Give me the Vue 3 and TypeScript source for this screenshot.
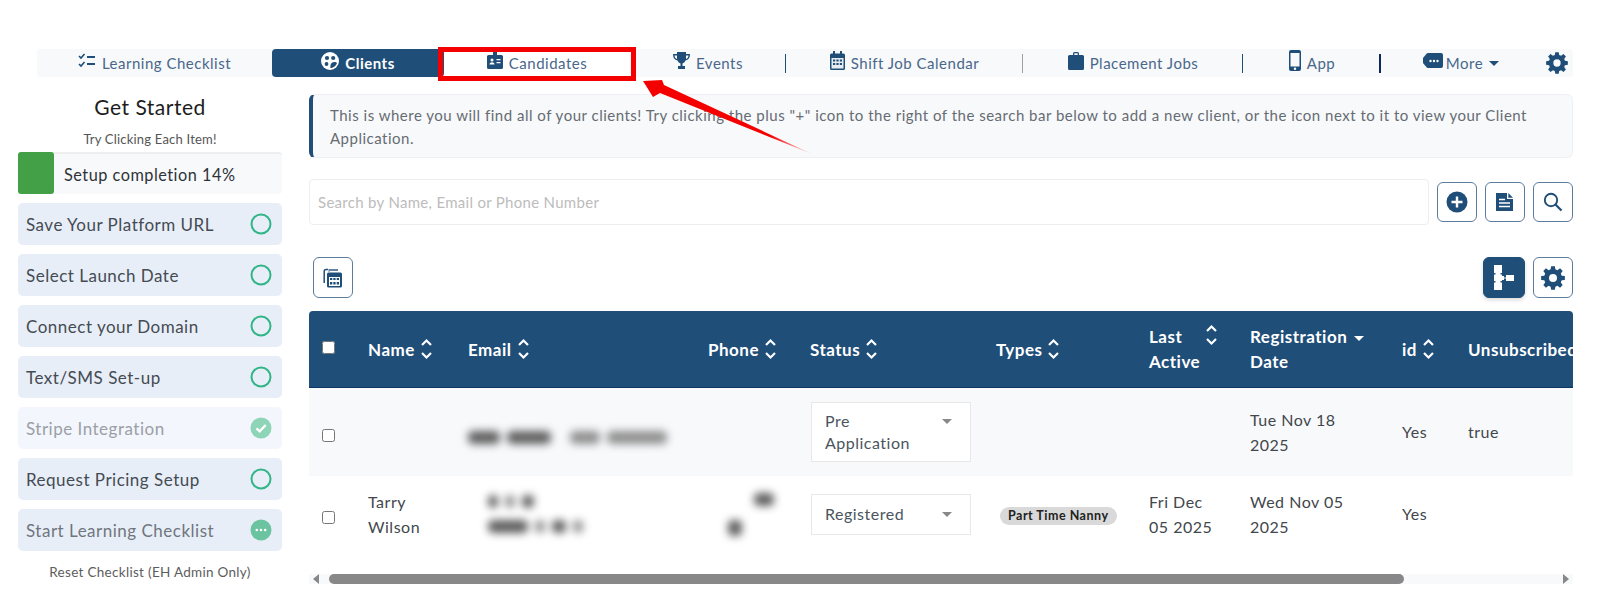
<template>
  <div class="page">
    <nav class="nav">
      <a class="nav-item">
        <svg class="ic" width="18" height="16" viewBox="0 0 18 16"><path d="M1 3l2 2 3.500-4M1 11l2 2 3.500-4" fill="none" stroke="#1f4e79" stroke-width="1.600"/><path d="M9 3h8v2H9zM9 10h8v2H9z" fill="#1f4e79"/></svg>
        Learning Checklist
      </a>
      <a class="nav-item active">
        <svg class="ic" width="18" height="18" viewBox="0 0 18 18"><circle cx="9" cy="9" r="9" fill="#fff"/><circle cx="6" cy="6" r="2.100" fill="#1f4e79"/><circle cx="12.200" cy="6" r="2.100" fill="#1f4e79"/><circle cx="5.500" cy="12" r="1.900" fill="#1f4e79"/><path d="M9.500 16c-.5-3 .5-6 4-6 1 0 2 .5 2.500 1-.8 2.500-3.500 5-6.500 5z" fill="#1f4e79"/></svg>
        Clients
      </a>
      <a class="nav-item boxed">
        <svg class="ic" width="16" height="19" viewBox="0 0 16 19"><path d="M1.500 5H6V1h4v4h4.500A1.500 1.500 0 0 1 16 6.500v11a1.500 1.500 0 0 1-1.500 1.500h-13A1.500 1.500 0 0 1 0 17.500v-11A1.500 1.500 0 0 1 1.500 5z" transform="translate(0 -1)" fill="#1f4e79"/><circle cx="5" cy="9" r="1.500" fill="#fff"/><path d="M2.500 13.500c0-3 5-3 5 0zM9.500 8h4v1.300h-4zM9.500 11h4v1.300h-4z" fill="#fff"/></svg>
        Candidates
      </a>
      <a class="nav-item sep">
        <svg class="ic" width="17" height="17" viewBox="0 0 17 17"><path d="M4 0h9v2h4c0 4-1.500 6-4.500 6.500C12 10 10.500 11 9.500 11.500V14H12v3H5v-3h2.500v-2.500C6.500 11 5 10 4.500 8.500 1.500 8 0 6 0 2h4zM1.500 3.500C1.700 5.500 2.500 6.500 4 7V3.500zM13 3.500V7c1.500-.5 2.300-1.500 2.500-3.500z" fill="#1f4e79"/></svg>
        Events
      </a>
      <a class="nav-item sep sep-gray">
        <svg class="ic" width="15" height="19" viewBox="0 0 15 19"><path d="M3 0h2v2.500h5V0h2v2.500h1.500A1.500 1.500 0 0 1 15 4v13.500a1.500 1.500 0 0 1-1.500 1.500h-12A1.500 1.500 0 0 1 0 17.500V4a1.500 1.500 0 0 1 1.500-1.500H3z" fill="#1f4e79"/><rect x="1.500" y="7" width="12" height="10.500" fill="#e9edf2"/><path d="M3 8.500h2.200v2H3zM6.400 8.500h2.200v2H6.400zM9.800 8.500H12v2H9.800zM3 12h2.200v2H3zM6.400 12h2.200v2H6.400zM9.800 12H12v2H9.800z" fill="#1f4e79"/></svg>
        Shift Job Calendar
      </a>
      <a class="nav-item sep">
        <svg class="ic" width="16" height="18" viewBox="0 0 16 18"><path d="M5 3V1.500A1.500 1.500 0 0 1 6.500 0h3A1.500 1.500 0 0 1 11 1.500V3h3.500A1.500 1.500 0 0 1 16 4.500v12a1.500 1.500 0 0 1-1.500 1.500h-13A1.500 1.500 0 0 1 0 16.500v-12A1.500 1.500 0 0 1 1.500 3zm1.300 0h3.400V1.300H6.300z" fill="#1f4e79" fill-rule="evenodd"/></svg>
        Placement Jobs
      </a>
      <a class="nav-item sep sep-dark">
        <svg class="ic" width="12" height="21" viewBox="0 0 12 21"><path d="M2 0h8a2 2 0 0 1 2 2v17a2 2 0 0 1-2 2H2a2 2 0 0 1-2-2V2a2 2 0 0 1 2-2zm-.5 3v13.500h9V3z" fill="#1f4e79" fill-rule="evenodd"/><circle cx="6" cy="18.700" r="1.200" fill="#fff"/></svg>
        App
      </a>
      <a class="nav-item more">
        <svg class="ic" width="20" height="15" viewBox="0 0 20 15"><path d="M5 0h13a2 2 0 0 1 2 2v11a2 2 0 0 1-2 2H5a2 2 0 0 1-1.500-.7L0 10V5l3.500-4.300A2 2 0 0 1 5 0z" fill="#1f4e79"/><circle cx="7.500" cy="8" r="1.200" fill="#fff"/><circle cx="11" cy="8" r="1.200" fill="#fff"/><circle cx="14.500" cy="8" r="1.200" fill="#fff"/></svg>
        More <i class="caret"></i>
      </a>
      <a class="nav-item gear-cell">
        <svg width="22" height="22" viewBox="0 0 24 24"><path :d="gearPath" fill="#1f4e79" fill-rule="evenodd"/></svg>
      </a>
    </nav>

    <div class="body">
      <aside class="side">
        <h2 class="side-title">Get Started</h2>
        <p class="side-sub">Try Clicking Each Item!</p>
        <div class="progress">
          <div class="progress-fill" :style="{ width: '36px' }"></div>
          <span>Setup completion 14%</span>
        </div>
        <div v-for="item in checklist" :key="item.label" class="check-row" :class="item.cls">
          <span>{{ item.label }}</span>
          <svg width="22" height="22" viewBox="0 0 22 22">
            <circle v-if="item.state === 'open'" cx="11" cy="11" r="9.500" fill="none" stroke="#2fb586" stroke-width="2"/>
            <template v-else-if="item.state === 'done'">
              <circle cx="11" cy="11" r="10.500" fill="#8ed5b8"/>
              <path d="M6.500 11.300l3.200 3 6-6.300" fill="none" stroke="#fff" stroke-width="2.400"/>
            </template>
            <template v-else>
              <circle cx="11" cy="11" r="10.500" fill="#6cc3a0"/>
              <circle cx="6.800" cy="11" r="1.300" fill="#fff"/>
              <circle cx="11" cy="11" r="1.300" fill="#fff"/>
              <circle cx="15.200" cy="11" r="1.300" fill="#fff"/>
            </template>
          </svg>
        </div>
        <p class="reset">Reset Checklist (EH Admin Only)</p>
      </aside>

      <main class="main">
        <div class="alert">This is where you will find all of your clients! Try clicking the plus "+" icon to the right of the search bar below to add a new client, or the icon next to it to view your Client Application.</div>

        <div class="search-row">
          <input class="search" type="text" placeholder="Search by Name, Email or Phone Number" />
          <button type="button" class="btn">
            <svg width="22" height="22" viewBox="0 0 22 22"><circle cx="11" cy="11" r="10.500" fill="#1f4e79"/><path d="M11 5.500v11M5.500 11h11" stroke="#fff" stroke-width="2.400"/></svg>
          </button>
          <button type="button" class="btn">
            <svg width="20" height="20" viewBox="0 0 20 20"><path d="M1 1h11v6h6v12H1z" fill="#1f4e79"/><path d="M13.300 1L18 5.700h-4.700z" fill="#1f4e79"/><path d="M4 7.500h6M4 11h11M4 14.500h11" stroke="#fff" stroke-width="1.500"/></svg>
          </button>
          <button type="button" class="btn">
            <svg width="20" height="20" viewBox="0 0 20 20"><circle cx="8" cy="8" r="6.200" fill="none" stroke="#1f4e79" stroke-width="1.900"/><path d="M12.500 12.500l6 6" stroke="#1f4e79" stroke-width="2.200"/></svg>
          </button>
        </div>

        <div class="tool-row">
          <button type="button" class="btn calc">
            <svg width="20" height="20" viewBox="0 0 20 20"><path d="M5 1.500H3A1.800 1.800 0 0 0 1.200 3.300V15" fill="none" stroke="#1f4e79" stroke-width="1.500"/><path d="M5.500 1H15v2H6.500v1H5.500z" fill="#1f4e79" opacity=".7"/><rect x="4" y="4.500" width="15" height="15" rx="1.500" fill="#1f4e79"/><rect x="6" y="9" width="11" height="9" fill="#fff"/><path d="M7 10h2.300v2H7zM10.300 10h2.300v2h-2.300zM13.700 10H16v2h-2.300zM7 14h2.300v2.500H7zM10.300 14h2.300v2.500h-2.300zM13.700 14H16v2.500h-2.300z" fill="#1f4e79"/></svg>
          </button>
          <div class="tool-right">
            <button type="button" class="btn solid">
              <svg width="20" height="25" viewBox="0 0 20 25"><path d="M0 0h8v8H6.500v1.500H8V16H6.500v1.500H8V25H0v-7.500h1.500V16H0V9.500h1.500V8H0z" fill="#fff"/><path d="M8 11h2v1.500h2V10h8v6h-8v-2.500h-2V15H8z" fill="#fff"/></svg>
            </button>
            <button type="button" class="btn">
              <svg width="24" height="24" viewBox="0 0 24 24"><path :d="gearPath" fill="#1f4e79" fill-rule="evenodd"/></svg>
            </button>
          </div>
        </div>

        <div class="table-wrap">
          <table class="table">
            <colgroup>
              <col v-for="(w, i) in colWidths" :key="i" :style="{ width: w + 'px' }" />
            </colgroup>
            <thead>
              <tr>
                <th><input type="checkbox" class="cb head-cb" /></th>
                <th v-for="h in sortableHead" :key="h">
                  <span class="th-in">{{ h }}
                    <svg class="sort" width="13" height="22" viewBox="0 0 13 22"><path d="M2 7l4.500-4.500L11 7M2 15l4.500 4.500L11 15" fill="none" stroke="#fff" stroke-width="2.200"/></svg>
                  </span>
                </th>
                <th>
                  <div class="th-split"><span>Last<br />Active</span>
                    <svg class="sort" width="13" height="22" viewBox="0 0 13 22"><path d="M2 7l4.500-4.500L11 7M2 15l4.500 4.500L11 15" fill="none" stroke="#fff" stroke-width="2.200"/></svg>
                  </div>
                </th>
                <th>Registration <i class="caret white"></i><br />Date</th>
                <th>
                  <span class="th-in">id
                    <svg class="sort" width="13" height="22" viewBox="0 0 13 22"><path d="M2 7l4.500-4.500L11 7M2 15l4.500 4.500L11 15" fill="none" stroke="#fff" stroke-width="2.200"/></svg>
                  </span>
                </th>
                <th>Unsubscribed</th>
              </tr>
            </thead>
            <tbody>
              <tr class="row-a">
                <td><input type="checkbox" class="cb" /></td>
                <td></td>
                <td colspan="2">
                  <div class="blur-line first">
                    <i class="blob w32 dark"></i><i class="blob w44 dark"></i><i class="blob w30 gap"></i><i class="blob w60"></i>
                  </div>
                </td>
                <td>
                  <div class="select tall"><span>Pre<br />Application</span><i class="caret gray"></i></div>
                </td>
                <td></td>
                <td></td>
                <td>Tue Nov 18<br />2025</td>
                <td>Yes</td>
                <td>true</td>
              </tr>
              <tr>
                <td><input type="checkbox" class="cb" /></td>
                <td>Tarry<br />Wilson</td>
                <td>
                  <div class="blur-block">
                    <div class="blur-line top"><i class="blob w10 dark"></i><i class="blob w10"></i><i class="blob w12 dark"></i></div>
                    <div class="blur-line"><i class="blob w40 dark"></i><i class="blob w10"></i><i class="blob w14 dark"></i><i class="blob w10"></i></div>
                  </div>
                </td>
                <td>
                  <div class="blur-block phone">
                    <i class="blob w20 dark"></i>
                    <i class="blob w14 dark low"></i>
                  </div>
                </td>
                <td>
                  <div class="select"><span>Registered</span><i class="caret gray"></i></div>
                </td>
                <td><span class="chip">Part Time Nanny</span></td>
                <td>Fri Dec<br />05 2025</td>
                <td>Wed Nov 05<br />2025</td>
                <td>Yes</td>
                <td></td>
              </tr>
            </tbody>
          </table>
        </div>

        <div class="scrollbar">
          <i class="arrow left"></i>
          <div class="thumb"></div>
          <i class="arrow right"></i>
        </div>
      </main>
    </div>

    <!-- annotations on top of the screenshot -->
    <div class="mark-box"></div>
    <svg class="mark-arrow" width="180" height="85" viewBox="0 0 180 85">
      <defs>
        <linearGradient id="tail" x1="0" y1="0" x2="1" y2="0">
          <stop offset="0.75" stop-color="#f40000" />
          <stop offset="1" stop-color="#f40000" stop-opacity="0.1" />
        </linearGradient>
      </defs>
      <polygon points="3,4 22,3 24,8 172,77 20,16 13,20" fill="url(#tail)" />
    </svg>
  </div>
</template>

<script setup lang="ts">
type CheckState = 'open' | 'done' | 'more'
interface CheckItem { label: string; state: CheckState; cls?: string }

const checklist: CheckItem[] = [
  { label: 'Save Your Platform URL', state: 'open' },
  { label: 'Select Launch Date', state: 'open' },
  { label: 'Connect your Domain', state: 'open' },
  { label: 'Text/SMS Set-up', state: 'open' },
  { label: 'Stripe Integration', state: 'done', cls: 'faded' },
  { label: 'Request Pricing Setup', state: 'open' },
  { label: 'Start Learning Checklist', state: 'more', cls: 'muted' },
]

const colWidths = [47, 100, 240, 102, 186, 153, 101, 152, 66, 140]
const sortableHead = ['Name', 'Email', 'Phone', 'Status', 'Types']

// cog outline with a round hole, shared by the settings buttons
function buildGear(teeth: number, outer: number, inner: number, hole: number): string {
  const pts: string[] = []
  const step = (Math.PI * 2) / teeth
  for (let i = 0; i < teeth; i++) {
    const a = i * step - Math.PI / 2
    const at = (r: number, d: number) =>
      `${(12 + r * Math.cos(a + d)).toFixed(2)} ${(12 + r * Math.sin(a + d)).toFixed(2)}`
    pts.push(at(inner, -step * 0.34), at(outer, -step * 0.2), at(outer, step * 0.2), at(inner, step * 0.34))
  }
  return `M${pts.join('L')}Z M${12 - hole} 12a${hole} ${hole} 0 1 0 ${hole * 2} 0a${hole} ${hole} 0 1 0 ${-hole * 2} 0Z`
}
const gearPath = buildGear(8, 12, 9, 4)
</script>

<style scoped>
.page {
  position: relative;
  width: 1600px;
  height: 595px;
  overflow: hidden;
  background: #fff;
  font-family: "Lato", "Open Sans", sans-serif;
  font-size: 16px;
  letter-spacing: 0.5px;
  color: #3a3f44;
}
.nav {
  display: grid;
  grid-template-columns: 235px 172px 186px 156px 237px 220px 138px 149px 43px;
  height: 28px;
  margin: 49px 27px 17px 37px;
  background: #f8f9fb;
  border-radius: 4px;
}
.nav-item {
  position: relative;
  display: flex;
  align-items: center;
  justify-content: center;
  gap: 6px;
  color: #49678a;
  font-size: 15px;
  white-space: nowrap;
}
.ic { margin-top: -5px; flex: none; }
.nav-item.active {
  background: #1f4e79;
  color: #fff;
  font-weight: 700;
  border-radius: 4px;
}
.nav-item.boxed { background: #fff; }
.nav-item.sep::after {
  content: "";
  position: absolute;
  right: 0;
  top: 5px;
  height: 19px;
  width: 1px;
  background: #1f4e79;
}
.nav-item.sep-gray::after { background: #9aa0a6; }
.nav-item.sep-dark::after { width: 2px; background: #0b2a5b; }
.nav-item.more { gap: 3px; padding-left: 11px; }
.gear-cell { padding-left: 10px; }
.caret {
  display: inline-block;
  width: 0;
  height: 0;
  margin-left: 3px;
  border-left: 5px solid transparent;
  border-right: 5px solid transparent;
  border-top: 5px solid #1f4e79;
  vertical-align: middle;
}
.caret.white { border-top-color: #fff; margin-left: 2px; }
.caret.gray { border-top-color: #888; margin: 0; }

.body { display: flex; }
.side { flex: none; width: 264px; margin: 0 27px 0 18px; }
.side-title {
  margin: 0;
  font-size: 21px;
  font-weight: 400;
  line-height: 26px;
  text-align: center;
  color: #1d1d1d;
}
.side-sub {
  margin: 10px 0 0;
  font-size: 13px;
  line-height: 18px;
  letter-spacing: 0.2px;
  text-align: center;
  color: #555;
}
.progress {
  display: flex;
  align-items: center;
  box-sizing: border-box;
  height: 42px;
  margin-top: 4px;
  background: #f8f9fb;
  border-top: 2px solid #eee;
  border-radius: 4px;
  font-size: 16.300px;
  color: #2e3338;
}
.progress-fill { height: 42px; margin: -2px 10px 0 0; background: #43a047; border-radius: 3px; }
.check-row {
  display: flex;
  align-items: center;
  justify-content: space-between;
  height: 42px;
  margin-top: 9px;
  padding: 0 10px 0 8px;
  background: #e8eef8;
  border-radius: 5px;
  font-size: 17px;
  color: #444b52;
}
.check-row.faded { background: #f3f6fc; color: #9aa0a6; }
.check-row.muted { color: #6f767d; }
.reset {
  margin: 11px 0 0;
  font-size: 13.500px;
  line-height: 20px;
  letter-spacing: 0.3px;
  text-align: center;
  color: #5c5c5c;
}

.main { flex: none; width: 1264px; }
.alert {
  box-sizing: border-box;
  height: 64px;
  padding: 9px 17px;
  background: #f8f9fb;
  border: 1px solid #eef0f3;
  border-left: 4px solid #1f4e79;
  border-radius: 6px;
  font-size: 15px;
  line-height: 23px;
  color: #666c73;
}
.search-row { display: flex; align-items: center; gap: 8px; margin-top: 21px; }
.search {
  flex: 1;
  box-sizing: border-box;
  height: 46px;
  padding: 0 8px;
  border: 1px solid #eee;
  border-radius: 4px;
  outline: none;
  font: inherit;
  font-size: 15px;
  letter-spacing: 0.3px;
}
.search::placeholder { color: #bcbcbc; }
.btn {
  flex: none;
  display: flex;
  align-items: center;
  justify-content: center;
  box-sizing: border-box;
  width: 40px;
  height: 40px;
  padding: 0;
  background: #fff;
  border: 1px solid #5d7b9b;
  border-radius: 6px;
}
.tool-row { display: flex; justify-content: space-between; align-items: center; margin: 32px 0 13px 4px; }
.tool-row .btn { height: 41px; }
.tool-right { display: flex; gap: 8px; }
.btn.solid { width: 42px; background: #1f4e79; border-color: #1f4e79; box-shadow: 0 2px 4px rgba(0,0,0,.15); }

.table-wrap { overflow: hidden; border-radius: 4px 4px 0 0; }
.table { width: 1287px; table-layout: fixed; border-collapse: collapse; }
th {
  height: 76px;
  padding: 0 12px;
  background: #1f4e79;
  border-bottom: 1px solid #0f3566;
  color: #fff;
  font-size: 17px;
  font-weight: 700;
  line-height: 25px;
  text-align: left;
  white-space: nowrap;
}
.th-in { display: inline-flex; align-items: center; gap: 5px; }
.th-split { display: flex; justify-content: space-between; align-items: flex-start; padding-right: 8px; }
td {
  padding: 0 12px;
  height: 88px;
  font-size: 16px;
  line-height: 25.500px;
  color: #42474c;
  overflow: hidden;
}
tbody tr + tr td { height: 76px; }
.row-a td { background: #f8f9fb; }
.cb { display: block; width: 13px; height: 13px; margin: 6px 0 0 1px; }
.cb.head-cb { margin: -4px 0 0 1px; }
.select {
  display: flex;
  align-items: center;
  justify-content: space-between;
  padding: 7px 18px 7px 13px;
  height: 41px;
  box-sizing: border-box;
  background: #fff;
  border: 1px solid #e8e8e8;
  color: #4a5560;
  margin: 0 1px;
}
.select.tall { height: 60px; line-height: 22px; }
.select.tall .caret { margin-top: -22px; }
.chip {
  display: inline-block;
  margin-left: 4px;
  padding: 0 8px;
  background: #d9d9d9;
  border-radius: 10px;
  font-size: 12.500px;
  font-weight: 700;
  line-height: 18px;
  white-space: nowrap;
  color: #222;
}
.blur-line { display: flex; align-items: center; gap: 7px; filter: blur(4.500px); }
.blur-line.first { margin-top: 10px; }
.blur-line.top { margin-bottom: 12px; }
.blur-block { padding-left: 20px; }
.blur-block.phone { display: flex; flex-direction: column; filter: blur(4.500px); gap: 14px; }
.blob { display: block; height: 13px; background: #8e8e8e; border-radius: 5px; flex: none; }
.blob.dark { background: #5e5e5e; }
.blob.gap { margin-left: 12px; }
.w10 { width: 10px; } .w12 { width: 12px; } .w14 { width: 14px; }
.w20 { width: 20px; } .w30 { width: 30px; } .w32 { width: 32px; }
.w40 { width: 40px; } .w44 { width: 44px; } .w60 { width: 60px; }
.blob.w20 { margin-left: 26px; }
.blob.low { height: 16px; }

.scrollbar {
  display: flex;
  align-items: center;
  justify-content: space-between;
  height: 10px;
  margin-top: 22px;
  padding: 0 4px;
  background: #f8f9fb;
}
.arrow { width: 0; height: 0; border-top: 5px solid transparent; border-bottom: 5px solid transparent; flex: none; }
.arrow.left { border-right: 6px solid #888; }
.arrow.right { border-left: 6px solid #888; }
.thumb { width: 1075px; height: 10px; margin: 0 auto 0 10px; background: #888; border-radius: 5px; }

.mark-box {
  position: absolute;
  left: 438px;
  top: 47px;
  width: 198px;
  height: 34px;
  box-sizing: border-box;
  border: 5px solid #f40000;
  pointer-events: none;
}
.mark-arrow { position: absolute; left: 640px; top: 77px; pointer-events: none; }
</style>
